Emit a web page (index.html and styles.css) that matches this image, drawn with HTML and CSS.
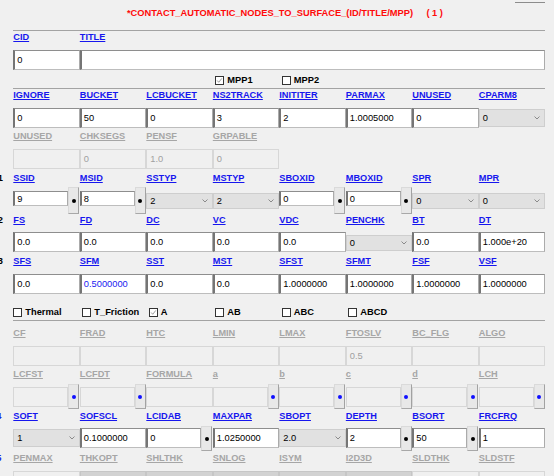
FILE: index.html
```html
<!DOCTYPE html>
<html>
<head>
<meta charset="utf-8">
<link rel="stylesheet" href="styles.css">
</head>
<body>
<div class="page">
  <div class="head">
    <div class="topline"></div>
    <div class="title">*CONTACT_AUTOMATIC_NODES_TO_SURFACE_(ID/TITLE/MPP)<span class="num">( 1 )</span></div>
  </div>
  <div class="rule"></div>

  <!-- CID / TITLE -->
  <div class="lrow"><span class="gut"></span><div class="grid">
    <span class="lbl">CID</span><span class="lbl">TITLE</span>
  </div></div>
  <div class="frow mt5">
    <div class="f">0</div><div class="f span7"></div>
  </div>

  <!-- MPP -->
  <div class="crow mt2">
    <label class="cb c4"><span class="box on"><svg viewBox="0 0 9 9"><polyline points="1.5,4.5 3.5,6.8 7.5,1.8"/></svg></span>MPP1</label>
    <label class="cb c5"><span class="box"></span>MPP2</label>
  </div>
  <div class="rule"></div>

  <!-- IGNORE row -->
  <div class="lrow"><span class="gut"></span><div class="grid">
    <span class="lbl">IGNORE</span><span class="lbl">BUCKET</span><span class="lbl">LCBUCKET</span><span class="lbl">NS2TRACK</span><span class="lbl">INITITER</span><span class="lbl">PARMAX</span><span class="lbl">UNUSED</span><span class="lbl">CPARM8</span>
  </div></div>
  <div class="frow mt5">
    <div class="f">0</div><div class="f">50</div><div class="f">0</div><div class="f">3</div><div class="f">2</div><div class="f">1.0005000</div><div class="f">0</div>
    <div class="sel s-std"><span>0</span><svg viewBox="0 0 6 4"><polyline points="0.5,0.5 3,3 5.5,0.5"/></svg></div>
  </div>

  <!-- UNUSED row -->
  <div class="lrow mt2"><span class="gut"></span><div class="grid">
    <span class="lbl dis">UNUSED</span><span class="lbl dis">CHKSEGS</span><span class="lbl dis">PENSF</span><span class="lbl dis">GRPABLE</span>
  </div></div>
  <div class="frow mt5">
    <div class="f dis"></div><div class="f dis">0</div><div class="f dis">1.0</div><div class="f dis">0</div>
  </div>

  <!-- Card 1 -->
  <div class="lrow mt3"><span class="gut"><b>1</b></span><div class="grid">
    <span class="lbl">SSID</span><span class="lbl">MSID</span><span class="lbl">SSTYP</span><span class="lbl">MSTYP</span><span class="lbl">SBOXID</span><span class="lbl">MBOXID</span><span class="lbl">SPR</span><span class="lbl">MPR</span>
  </div></div>
  <div class="frow r-ssid mt1">
    <div class="cell"><div class="f">9</div><div class="btn"><i></i></div></div>
    <div class="cell"><div class="f">8</div><div class="btn"><i></i></div></div>
    <div class="sel"><span>2</span><svg viewBox="0 0 6 4"><polyline points="0.5,0.5 3,3 5.5,0.5"/></svg></div>
    <div class="sel"><span>2</span><svg viewBox="0 0 6 4"><polyline points="0.5,0.5 3,3 5.5,0.5"/></svg></div>
    <div class="cell"><div class="f">0</div><div class="btn"><i></i></div></div>
    <div class="cell"><div class="f">0</div><div class="btn"><i></i></div></div>
    <div class="sel"><span>0</span><svg viewBox="0 0 6 4"><polyline points="0.5,0.5 3,3 5.5,0.5"/></svg></div>
    <div class="sel"><span>0</span><svg viewBox="0 0 6 4"><polyline points="0.5,0.5 3,3 5.5,0.5"/></svg></div>
  </div>

  <!-- Card 2 -->
  <div class="lrow"><span class="gut"><b>2</b></span><div class="grid">
    <span class="lbl">FS</span><span class="lbl">FD</span><span class="lbl">DC</span><span class="lbl">VC</span><span class="lbl">VDC</span><span class="lbl">PENCHK</span><span class="lbl">BT</span><span class="lbl">DT</span>
  </div></div>
  <div class="frow r-fs mt4">
    <div class="f">0.0</div><div class="f">0.0</div><div class="f">0.0</div><div class="f">0.0</div><div class="f">0.0</div>
    <div class="sel"><span>0</span><svg viewBox="0 0 6 4"><polyline points="0.5,0.5 3,3 5.5,0.5"/></svg></div>
    <div class="f">0.0</div><div class="f">1.000e+20</div>
  </div>

  <!-- Card 3 -->
  <div class="lrow mt3"><span class="gut"><b>3</b></span><div class="grid">
    <span class="lbl">SFS</span><span class="lbl">SFM</span><span class="lbl">SST</span><span class="lbl">MST</span><span class="lbl">SFST</span><span class="lbl">SFMT</span><span class="lbl">FSF</span><span class="lbl">VSF</span>
  </div></div>
  <div class="frow mt5">
    <div class="f">0.0</div><div class="f blue">0.5000000</div><div class="f">0.0</div><div class="f">0.0</div><div class="f">1.0000000</div><div class="f">1.0000000</div><div class="f">1.0000000</div><div class="f">1.0000000</div>
  </div>

  <!-- options -->
  <div class="crow mt10">
    <label class="cb c1 first"><span class="box"></span>Thermal</label>
    <label class="cb c2"><span class="box"></span>T_Friction</label>
    <label class="cb c3"><span class="box on"><svg viewBox="0 0 9 9"><polyline points="1.5,4.5 3.5,6.8 7.5,1.8"/></svg></span>A</label>
    <label class="cb c4"><span class="box"></span>AB</label>
    <label class="cb c5"><span class="box"></span>ABC</label>
    <label class="cb c6"><span class="box"></span>ABCD</label>
  </div>
  <div class="rule"></div>

  <!-- CF row -->
  <div class="lrow mt6"><span class="gut"></span><div class="grid">
    <span class="lbl dis">CF</span><span class="lbl dis">FRAD</span><span class="lbl dis">HTC</span><span class="lbl dis">LMIN</span><span class="lbl dis">LMAX</span><span class="lbl dis">FTOSLV</span><span class="lbl dis">BC_FLG</span><span class="lbl dis">ALGO</span>
  </div></div>
  <div class="frow mt5">
    <div class="f dis"></div><div class="f dis"></div><div class="f dis"></div><div class="f dis"></div><div class="f dis"></div><div class="f dis">0.5</div><div class="f dis"></div><div class="f dis"></div>
  </div>

  <!-- LCFST row -->
  <div class="lrow mt2"><span class="gut"></span><div class="grid">
    <span class="lbl dis">LCFST</span><span class="lbl dis">LCFDT</span><span class="lbl dis">FORMULA</span><span class="lbl dis lc">a</span><span class="lbl dis lc">b</span><span class="lbl dis lc">c</span><span class="lbl dis lc">d</span><span class="lbl dis">LCH</span>
  </div></div>
  <div class="frow r-lc mt2">
    <div class="cell"><div class="f dis"></div><div class="btn blue"><i></i></div></div>
    <div class="cell"><div class="f dis"></div><div class="btn blue"><i></i></div></div>
    <div class="f dis"></div>
    <div class="cell"><div class="f dis"></div><div class="btn blue"><i></i></div></div>
    <div class="cell"><div class="f dis"></div><div class="btn blue"><i></i></div></div>
    <div class="cell"><div class="f dis"></div><div class="btn blue"><i></i></div></div>
    <div class="cell"><div class="f dis"></div><div class="btn blue"><i></i></div></div>
    <div class="cell"><div class="f dis"></div><div class="btn blue"><i></i></div></div>
  </div>

  <!-- SOFT row -->
  <div class="lrow mt1"><span class="gut"><b class="bl">4</b></span><div class="grid">
    <span class="lbl">SOFT</span><span class="lbl">SOFSCL</span><span class="lbl">LCIDAB</span><span class="lbl">MAXPAR</span><span class="lbl">SBOPT</span><span class="lbl">DEPTH</span><span class="lbl">BSORT</span><span class="lbl">FRCFRQ</span>
  </div></div>
  <div class="frow r-soft mt2">
    <div class="sel"><span>1</span><svg viewBox="0 0 6 4"><polyline points="0.5,0.5 3,3 5.5,0.5"/></svg></div>
    <div class="f">0.1000000</div>
    <div class="cell"><div class="f">0</div><div class="btn"><i></i></div></div>
    <div class="f">1.0250000</div>
    <div class="sel"><span>2.0</span><svg viewBox="0 0 6 4"><polyline points="0.5,0.5 3,3 5.5,0.5"/></svg></div>
    <div class="cell"><div class="f">2</div><div class="btn"><i></i></div></div>
    <div class="cell"><div class="f">50</div><div class="btn"><i></i></div></div>
    <div class="f">1</div>
  </div>

  <!-- PENMAX row -->
  <div class="lrow mt1"><span class="gut"><b class="bl">5</b></span><div class="grid">
    <span class="lbl dis">PENMAX</span><span class="lbl dis">THKOPT</span><span class="lbl dis">SHLTHK</span><span class="lbl dis">SNLOG</span><span class="lbl dis">ISYM</span><span class="lbl dis">I2D3D</span><span class="lbl dis">SLDTHK</span><span class="lbl dis">SLDSTF</span>
  </div></div>
  <div class="frow mt5">
    <div class="f dis">0.0</div><div class="f dark">0</div><div class="f dark">0</div><div class="f dark">0</div><div class="f dark">0</div><div class="f dark">0</div><div class="f dis">0.0</div><div class="f dis">0.0</div>
  </div>
</div>
</body>
</html>
```

FILE: styles.css
```css
html, body {
  margin: 0;
  padding: 0;
  background: #f0f0f0;
  overflow: hidden;
}
body {
  font-family: "Liberation Sans", Arial, sans-serif;
  font-size: 9.3px;
  color: #000;
}
.page {
  margin-left: 13.3px;
  width: 532px;
}
.head {
  height: 28px;
}
.topline {
  margin-top: 2px;
  margin-left: auto;
  width: 30px;
  height: 1px;
  background: #8c8c8c;
}
.title {
  padding-left: 113.7px;
  line-height: 21px;
  font-weight: bold;
  font-size: 9.3px;
  color: #ff0a0a;
  white-space: nowrap;
}
.title .num {
  margin-left: 13.4px;
  white-space: pre;
}
.rule {
  height: 1px;
  background: #a3a3a3;
}

.mt1 { margin-top: 1px; }
.mt2 { margin-top: 2px; }
.mt3 { margin-top: 3px; }
.mt4 { margin-top: 4px; }
.mt5 { margin-top: 5px; }
.mt6 { margin-top: 6px; }
.mt10 { margin-top: 10px; }

.lrow {
  display: flex;
  height: 14px;
  margin-left: -13.3px;
}
.gut {
  flex: none;
  width: 13.3px;
  box-sizing: border-box;
  padding-right: 10.3px;
  display: flex;
  justify-content: flex-end;
  overflow: hidden;
  font-weight: bold;
  font-size: 9.3px;
  line-height: 12px;
  color: #000;
}
.gut b { flex: none; }
.gut b.bl { color: #1a1af0; margin-right: 1.5px; }

.grid {
  display: grid;
  grid-template-columns: repeat(8, 66.5px);
}
.lbl {
  font-weight: bold;
  font-size: 9.2px;
  line-height: 12px;
  color: #1616ee;
  text-decoration: underline;
  white-space: nowrap;
}
.lbl.dis {
  color: #a6a6a6;
}

.frow {
  display: grid;
  grid-template-columns: repeat(8, 66.5px);
  height: 20px;
  align-items: start;
}
.span7 { grid-column: span 7; }

.f {
  box-sizing: border-box;
  height: 20px;
  background: #fff;
  border-top: 1px solid #8e8e8e;
  border-left: 2px solid #757575;
  border-right: 1px solid #ababab;
  border-bottom: 1px solid #bdbdbd;
  padding-left: 2px;
  display: flex;
  align-items: center;
  white-space: nowrap;
  overflow: hidden;
  font-size: 9.3px;
  color: #000;
}
.f.blue { color: #1a1af0; }
.f.dis {
  background: #f0f0f0;
  border: 1px solid #d7d7d7;
  padding-left: 3px;
  color: #a0a0a0;
}
.f.dark {
  background: #d2d2d2;
  border: 1px solid #c6c6c6;
  padding-left: 3px;
  color: #8a8a8a;
}

.cell {
  display: flex;
  align-items: flex-start;
}
.cell .f {
  flex: 1 1 auto;
  min-width: 0;
}
.btn {
  flex: none;
  width: 11px;
  margin-right: 0.5px;
  box-sizing: border-box;
  background: #e8e8e8;
  border: 1px solid #dadada;
  border-right-color: #a2a2a2;
  border-bottom-color: #a8a8a8;
  display: flex;
  align-items: center;
  justify-content: center;
}
.btn i {
  display: block;
  width: 4px;
  height: 4px;
  border-radius: 50%;
  background: #000;
}
.btn.blue i { background: #1010ff; }

.sel {
  box-sizing: border-box;
  height: 18px;
  margin-top: 1px;
  background: #e1e1e1;
  border: 1px solid #cecece;
  padding: 0 4px 0 3px;
  display: flex;
  align-items: center;
  justify-content: space-between;
  font-size: 9.3px;
  color: #000;
}
.sel svg {
  width: 6px;
  height: 4px;
  fill: none;
  stroke: #8a8a8a;
  stroke-width: 1;
}

/* row specific geometry */
.r-ssid { height: 27px; }
.r-ssid .f { height: 15px; margin-top: 4px; }
.r-ssid .sel { height: 16px; margin-top: 6px; }
.r-ssid .btn { height: 27px; }

.r-fs .sel { height: 16px; margin-top: 3px; }

.r-lc { height: 25px; }
.r-lc .f { margin-top: 3px; }
.r-lc .btn { height: 25px; }

.r-soft { height: 25px; }
.r-soft .f { margin-top: 2px; }
.r-soft .sel { height: 18px; margin-top: 3px; }
.r-soft .btn { height: 25px; }

/* checkbox rows */
.crow {
  display: grid;
  grid-template-columns: repeat(8, 66.5px);
  height: 16px;
  align-items: center;
}
.cb {
  display: flex;
  align-items: center;
  gap: 3px;
  margin-left: 2.5px;
  font-weight: bold;
  font-size: 9.3px;
  color: #000;
  white-space: nowrap;
}
.cb.first { margin-left: 0; }
.c1 { grid-column: 1; }
.c2 { grid-column: 2; }
.c3 { grid-column: 3; }
.c4 { grid-column: 4; }
.c5 { grid-column: 5; }
.c6 { grid-column: 6; }
.box {
  box-sizing: border-box;
  width: 9px;
  height: 9px;
  border: 1px solid #333;
  background: #fff;
  display: block;
}
.box svg {
  display: block;
  width: 7px;
  height: 7px;
  fill: none;
  stroke: #8c8c8c;
  stroke-width: 1.1;
}
```
